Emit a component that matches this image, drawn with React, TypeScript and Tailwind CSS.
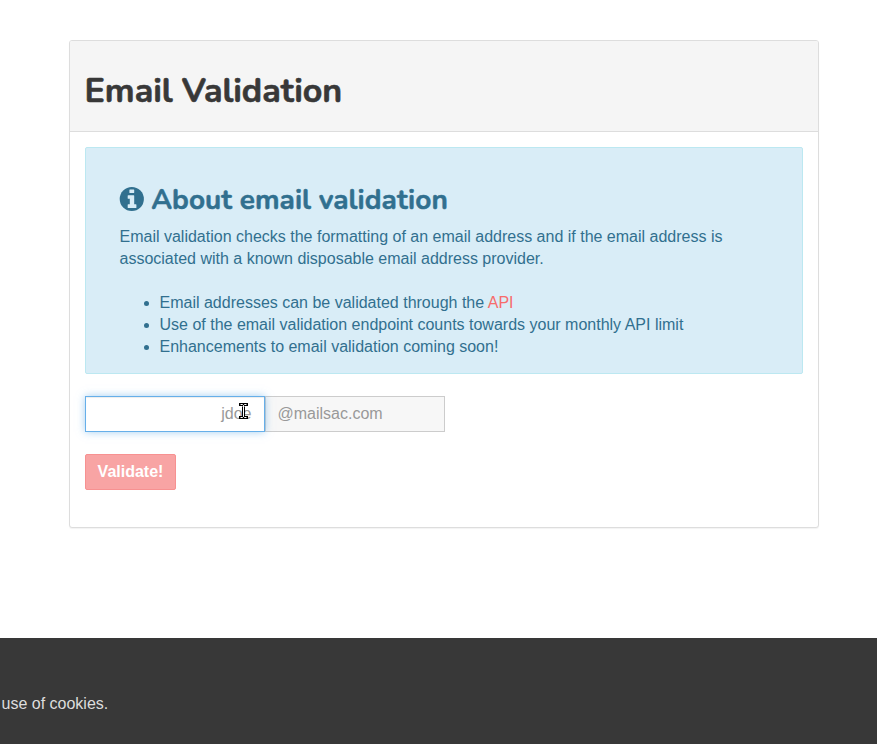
import React from "react";

function InfoIcon() {
  return (
    <svg className="mt-[9px] h-6 w-6 shrink-0 overflow-visible" viewBox="0 0 24 24" aria-hidden="true">
      <circle cx="11.800" cy="12" r="12.100" fill="currentColor" />
      <path d="M9.900 2.500h3.800q.5 0 .5.500v2.500q0 .5-.5.500H9.900q-.5 0-.5-.5V3q0-.5.5-.5ZM8.200 8.300h5.500q.5 0 .5.500v8.500h1.700q.5 0 .5.500v2.600q0 .5-.5.500H8.200q-.5 0-.5-.5v-2.600q0-.5.5-.5h1.600v-5.500H8.200q-.5 0-.5-.5V8.800q0-.5.500-.5Z" fill="#d9edf7" />
    </svg>
  );
}

function TextCursor() {
  return (
    <svg className="pointer-events-none absolute left-[154px] top-[6px] h-[18px] w-[9px]" viewBox="0 0 9 18" aria-hidden="true">
      <path d="M1.500 2.500H3.500L4.500 3.500L5.500 2.500H7.500M4.500 3.500V14.500M1.500 15.500H3.500L4.500 14.500L5.500 15.500H7.500" fill="none" stroke="#000" strokeWidth="3" strokeLinecap="square" />
      <path d="M1.500 2.500H3.500L4.500 3.500L5.500 2.500H7.500M4.500 3.500V14.500M1.500 15.500H3.500L4.500 14.500L5.500 15.500H7.500" fill="none" stroke="#fff" strokeWidth="1" />
    </svg>
  );
}

export default function App() {
  return (
    <div className="flex h-[744px] w-full flex-col overflow-hidden bg-white pt-10 font-['Liberation_Sans',Arial,sans-serif] text-base leading-[22px]">
      <main className="ml-[69px] h-[488px] w-[750px] shrink-0 rounded-[3px] border border-[#dddddd] bg-white shadow-[0_1px_1px_rgba(0,0,0,0.05)]">
        <header className="h-[91px] rounded-t-[2px] border-b border-[#dddddd] bg-[#f5f5f5] px-[15px] pt-[30px]">
          <h1 className="-ml-[0.400px] whitespace-nowrap font-['Nunito',Lato,sans-serif] text-[34px] font-bold leading-10 tracking-[-0.050px] text-[#383838] [-webkit-text-stroke:0.6px_currentColor]">
            Email Validation
          </h1>
        </header>
        <div className="p-[15px]">
          <section className="h-[227px] rounded-[2px] border border-[#bce8f1] bg-[#d9edf7] px-[33.5px] pt-[30px] text-[#31708f]">
            <h2 className="flex gap-[7.700px] whitespace-nowrap font-['Nunito',Lato,sans-serif] text-[28px] font-bold leading-[44px] tracking-[0.040px]">
              <InfoIcon />
              <span className="[-webkit-text-stroke:0.5px_currentColor]">About email validation</span>
            </h2>
            <p className="mt-1">
              Email validation checks the formatting of an email address and if the email address is
              <br />
              associated with a known disposable email address provider.
            </p>
            <ul className="mt-[22px] list-disc pl-10">
              <li>Email addresses can be validated through the <a className="text-[#f76c6c]">API</a></li>
              <li>Use of the email validation endpoint counts towards your monthly API limit</li>
              <li>Enhancements to email validation coming soon!</li>
            </ul>
          </section>
          <form className="mt-[22px]">
            <div className="flex">
              <div className="relative h-9 w-[180px]">
                <input
                  className="h-9 w-[180px] border border-[#66afe9] bg-white px-[12.500px] py-0 text-right text-base text-[#555555] shadow-[inset_0_1px_1px_rgba(0,0,0,0.075),0_0_8px_rgba(102,175,233,0.6)] outline-none placeholder:text-[#999999]"
                  placeholder="jdoe"
                  aria-label="Email name"
                />
                <TextCursor />
              </div>
              <div className="h-9 w-[180px] border border-[#cccccc] bg-[#f7f7f7] px-[11.500px] py-[6px] text-[#999999]">
                @mailsac.com
              </div>
            </div>
            <button type="button" className="mt-[22px] block h-9 w-[91px] rounded-[2px] border border-[#f79191] bg-[#f8a4a4] text-base font-bold leading-[22px] text-white">
              Validate!
            </button>
          </form>
        </div>
      </main>
      <footer className="mt-[110px] h-[106px] shrink-0 bg-[#383838] pl-[1.500px] pt-[55px] text-[#dddddd]">
        use of cookies.
      </footer>
    </div>
  );
}
